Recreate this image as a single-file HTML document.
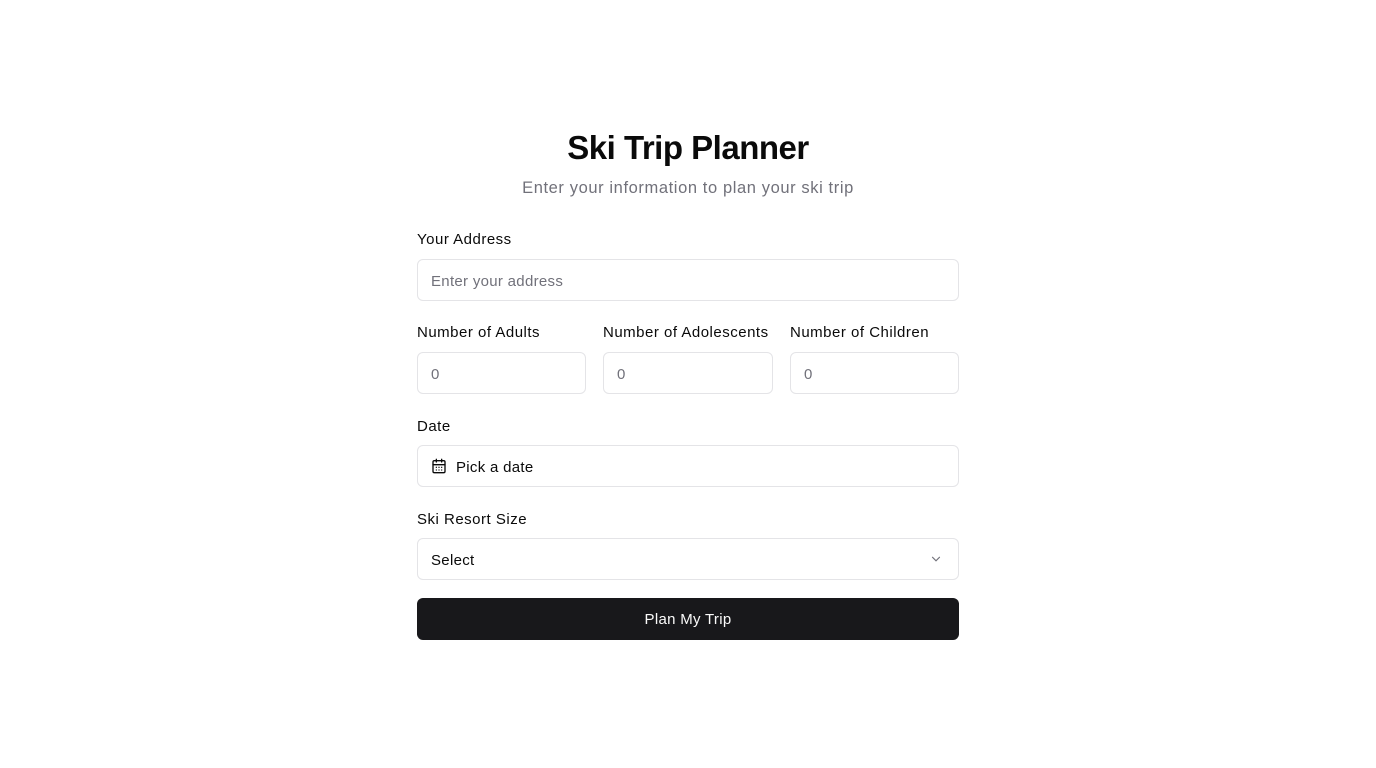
<!DOCTYPE html>
<html><head><style>
*{box-sizing:border-box;margin:0;padding:0}
body{width:1376px;height:768px;background:#fff;font-family:"Liberation Sans",sans-serif;color:#0a0a0a;position:relative}
.a{position:absolute}
h1{position:absolute;top:129px;left:0;width:1376px;text-align:center;font-size:33px;font-weight:700;letter-spacing:-0.5px}
.sub{top:179px;left:0;width:1376px;text-align:center;font-size:16.5px;letter-spacing:0.6px;color:#71717a}
.lbl{font-size:15px;letter-spacing:0.5px;color:#0a0a0a}
.in{border:1px solid #e4e4e7;border-radius:6px;height:42px;font-size:15px;letter-spacing:0.3px;padding-left:13px;line-height:43px;color:#71717a}
.btn{background:#18181b;color:#fafafa;border-radius:6px;height:42px;text-align:center;line-height:43px;font-size:15px;letter-spacing:0.3px}
</style></head><body>
<h1>Ski Trip Planner</h1>
<div class="a sub">Enter your information to plan your ski trip</div>
<div class="a lbl" style="left:417px;top:231px">Your Address</div>
<div class="a in" style="left:417px;top:259px;width:542px">Enter your address</div>
<div class="a lbl" style="left:417px;top:324px">Number of Adults</div>
<div class="a lbl" style="left:603px;top:324px">Number of Adolescents</div>
<div class="a lbl" style="left:790px;top:324px">Number of Children</div>
<div class="a in" style="left:417px;top:352px;width:169px">0</div>
<div class="a in" style="left:603px;top:352px;width:170px">0</div>
<div class="a in" style="left:790px;top:352px;width:169px">0</div>
<div class="a lbl" style="left:417px;top:418px">Date</div>
<div class="a in" style="left:417px;top:445px;width:542px;color:#0a0a0a;padding-left:38px">Pick a date</div>
<svg class="a" style="left:431px;top:458px" width="16" height="16" viewBox="0 0 24 24" fill="none" stroke="#0a0a0a" stroke-width="2" stroke-linecap="round"><rect x="3" y="4" width="18" height="18" rx="2"/><path d="M8 2v4M16 2v4M3 10h18M8 14h.01M12 14h.01M16 14h.01M8 18h.01M12 18h.01M16 18h.01"/></svg>
<div class="a lbl" style="left:417px;top:511px">Ski Resort Size</div>
<div class="a in" style="left:417px;top:538px;width:542px;color:#0a0a0a">Select</div>
<svg class="a" style="left:929px;top:552px" width="14" height="14" viewBox="0 0 24 24" fill="none" stroke="#71717a" stroke-width="2" stroke-linecap="round"><path d="M6 9l6 6 6-6"/></svg>
<div class="a btn" style="left:417px;top:598px;width:542px">Plan My Trip</div>
</body></html>
